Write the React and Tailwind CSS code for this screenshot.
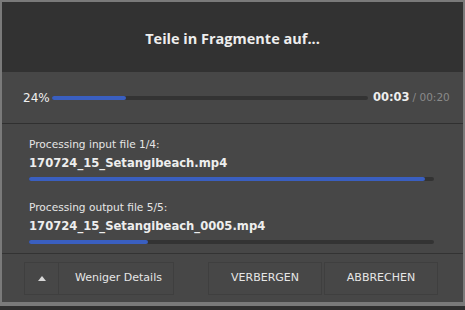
export default function App() {
  const sans = { fontFamily: "Tahoma, 'DejaVu Sans', Verdana, sans-serif" };
  return (
    <div className="w-[465px] h-[310px] bg-[#2f2f2f] overflow-hidden">
      <div className="h-[306px] border-x-2 border-t-2 border-b-[4px] border-[#7a7a7a] bg-[#474747] flex flex-col" style={sans}>
        <div className="h-[70px] shrink-0 bg-[#323232] flex items-center justify-center">
          <span className="text-[14.5px] font-bold text-[#eeeeee] pt-[4px]" style={{ fontFamily: "'Open Sans', sans-serif" }}>
            Teile in Fragmente auf...
          </span>
        </div>
        <div className="h-[52px] shrink-0 flex items-center pl-[21px] border-b border-[#303030] whitespace-nowrap">
          <span className="text-[12px] text-[#f0f0f0] w-[29px] shrink-0">24%</span>
          <div className="w-[316px] shrink-0 h-[4px] rounded-full bg-[#333333] relative">
            <div className="absolute left-0 top-0 h-[4px] w-[74px] rounded-full bg-[#3a5fc0]" />
          </div>
          <span className="ml-[5px] text-[11.5px] font-bold text-[#eeeeee]">00:03</span>
          <span className="ml-[3px] text-[10.5px] text-[#8a8a8a]">/ 00:20</span>
        </div>
        <div className="flex flex-col shrink-0 pl-[27px] pr-[29px] pt-[13px] h-[130px] border-b border-[#333333]">
          <div className="text-[10.6px] text-[#e6e6e6] leading-[14px]">Processing input file 1/4:</div>
          <div className="text-[11.6px] font-bold text-[#eeeeee] leading-[14px] mt-[5px]">170724_15_Setangibeach.mp4</div>
          <div className="mt-[7px] h-[4px] rounded-full bg-[#333333] relative">
            <div className="absolute left-0 top-0 h-[4px] w-[396px] rounded-full bg-[#3a5fc0]" />
          </div>
          <div className="text-[10.6px] text-[#e6e6e6] leading-[14px] mt-[19px]">Processing output file 5/5:</div>
          <div className="text-[11.6px] font-bold text-[#eeeeee] leading-[14px] mt-[5px]">170724_15_Setangibeach_0005.mp4</div>
          <div className="mt-[7px] h-[4px] rounded-full bg-[#333333] relative">
            <div className="absolute left-0 top-0 h-[4px] w-[119px] rounded-full bg-[#3a5fc0]" />
          </div>
        </div>
        <div className="flex-1 flex items-center pl-[22px] pr-[25px]">
          <div className="flex h-[33px] w-[150px] shrink-0 border border-[#3f3f3f]">
            <div className="w-[34px] shrink-0 border-r border-[#3f3f3f] flex items-center justify-center">
              <svg width="8" height="5" viewBox="0 0 8 5"><path d="M0 5 L4 0 L8 5 Z" fill="#d8d8d8" /></svg>
            </div>
            <div className="w-[114px] shrink-0 flex items-center pl-[16px] text-[11px] text-[#e6e6e6] whitespace-nowrap">Weniger Details</div>
          </div>
          <div className="ml-auto flex h-[33px] w-[114px] border border-[#3f3f3f] items-center justify-center text-[11px] text-[#e6e6e6]">VERBERGEN</div>
          <div className="ml-[2px] flex h-[33px] w-[114px] border border-[#3f3f3f] items-center justify-center text-[11px] text-[#e6e6e6]">ABBRECHEN</div>
        </div>
      </div>
    </div>
  );
}
